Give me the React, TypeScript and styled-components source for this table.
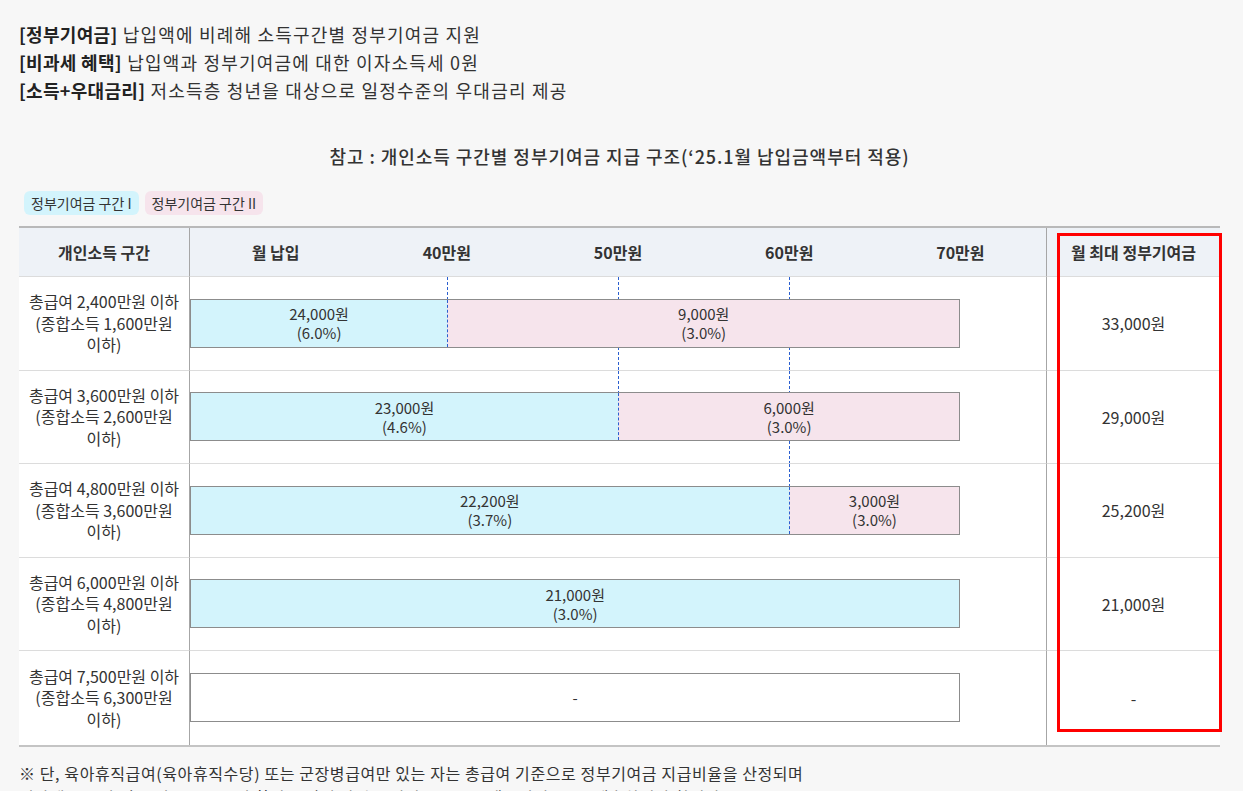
import React from "react";
import styled, { createGlobalStyle } from "styled-components";

const GlobalStyle = createGlobalStyle`
  html, body {
    margin: 0;
    overflow: hidden;
    background: #f7f7f7;
  }
  body {
    font-family: "Noto Sans CJK KR", "Noto Sans", sans-serif;
    color: #333;
  }
`;

const Page = styled.div`
  width: 1201px;
  padding: 20px 23px 0 19px;
`;

const IntroList = styled.ul`
  list-style: none;
  margin: 0;
  padding: 0;
  font-size: 18px;
  line-height: 28px;
  letter-spacing: 1.2px;
  color: #333;
`;

const Tag = styled.strong`
  font-weight: 700;
  letter-spacing: 0.3px;
  color: #222;
`;

const Title = styled.h3`
  margin: 38px 0 0;
  text-align: center;
  font-size: 18px;
  line-height: 28px;
  font-weight: 500;
  letter-spacing: 0.95px;
  color: #333;
`;

const Legend = styled.div`
  display: flex;
  gap: 6px;
  margin: 21px 0 11px 5px;
`;

const Chip = styled.span<{ $bg: string }>`
  display: inline-block;
  height: 24px;
  padding: 0 7px;
  border-radius: 6px;
  background: ${(p) => p.$bg};
  font-size: 14px;
  line-height: 24px;
  color: #333;
`;

const Table = styled.div`
  position: relative;
  display: grid;
  grid-template-columns: 171px 857px 173px;
  background: #fff;
  border-top: 2px solid #b9b9b9;
  border-bottom: 2px solid #c4c4c4;
`;

const HeadCell = styled.div<{ $divider?: boolean }>`
  box-sizing: border-box;
  height: 49px;
  display: flex;
  align-items: center;
  justify-content: center;
  background: #eef2f7;
  border-bottom: 1px solid #dcdcdc;
  border-right: ${(p) => (p.$divider ? "1px solid #a6a6a6" : "none")};
  font-size: 16px;
  font-weight: 700;
  color: #333;
`;

const AxisHead = styled(HeadCell)`
  display: grid;
  grid-template-columns: repeat(5, 1fr);
  justify-items: center;
`;

const Cell = styled.div<{ $divider?: boolean; $last?: boolean }>`
  box-sizing: border-box;
  height: 93.5px;
  display: flex;
  align-items: center;
  justify-content: center;
  border-bottom: ${(p) => (p.$last ? "none" : "1px solid #dcdcdc")};
  border-right: ${(p) => (p.$divider ? "1px solid #a6a6a6" : "none")};
  font-size: 16px;
  color: #333;
`;

const LabelCell = styled(Cell)`
  padding: 0 6px;
  text-align: center;
  line-height: 21.5px;
  word-break: keep-all;
`;

const ChartCell = styled(Cell)`
  position: relative;
  justify-content: flex-start;
`;

const Guide = styled.span<{ $at: number; $ends?: boolean }>`
  position: absolute;
  top: 0;
  bottom: ${(p) => (p.$ends ? "23px" : "0")};
  left: ${(p) => p.$at}%;
  width: 1px;
  background-image: repeating-linear-gradient(
    to bottom,
    #2b5fcf 0 3px,
    transparent 3px 5px
  );
`;

const Bar = styled.div`
  position: relative;
  z-index: 1;
  box-sizing: border-box;
  width: 90%;
  height: 49px;
  display: flex;
  border: 1px solid #8c8c8c;
  background: #fff;
`;

const Segment = styled.div<{ $share: number; $tone: "one" | "two" | "none" }>`
  box-sizing: border-box;
  width: ${(p) => p.$share * 100}%;
  display: flex;
  flex-direction: column;
  align-items: center;
  justify-content: center;
  background: ${(p) =>
    p.$tone === "one" ? "#d3f4fc" : p.$tone === "two" ? "#f6e4ec" : "#fff"};
  font-size: 15px;
  line-height: 19px;
  color: #333;
  & + & {
    border-left: 1px dashed #2b5fcf;
  }
`;

const RedBox = styled.div`
  position: absolute;
  top: 5px;
  right: -2px;
  bottom: 13px;
  width: 165px;
  box-sizing: border-box;
  border: 3px solid #ff0000;
  pointer-events: none;
  z-index: 2;
`;

const Notes = styled.div`
  margin-top: 14px;
  font-size: 16px;
  line-height: 24px;
  letter-spacing: 0.6px;
  color: #333;
`;

type Part = { share: number; tone: "one" | "two" | "none"; amount: string; rate?: string };
type Line = { at: number; ends?: boolean };

const rows: { gross: string; total: string; guides: Line[]; parts: Part[]; max: string }[] = [
  {
    gross: "2,400",
    total: "1,600",
    guides: [{ at: 30, ends: true }, { at: 50 }, { at: 70 }],
    parts: [
      { share: 3 / 9, tone: "one", amount: "24,000원", rate: "(6.0%)" },
      { share: 6 / 9, tone: "two", amount: "9,000원", rate: "(3.0%)" },
    ],
    max: "33,000원",
  },
  {
    gross: "3,600",
    total: "2,600",
    guides: [{ at: 50, ends: true }, { at: 70 }],
    parts: [
      { share: 5 / 9, tone: "one", amount: "23,000원", rate: "(4.6%)" },
      { share: 4 / 9, tone: "two", amount: "6,000원", rate: "(3.0%)" },
    ],
    max: "29,000원",
  },
  {
    gross: "4,800",
    total: "3,600",
    guides: [{ at: 70, ends: true }],
    parts: [
      { share: 7 / 9, tone: "one", amount: "22,200원", rate: "(3.7%)" },
      { share: 2 / 9, tone: "two", amount: "3,000원", rate: "(3.0%)" },
    ],
    max: "25,200원",
  },
  {
    gross: "6,000",
    total: "4,800",
    guides: [],
    parts: [{ share: 1, tone: "one", amount: "21,000원", rate: "(3.0%)" }],
    max: "21,000원",
  },
  {
    gross: "7,500",
    total: "6,300",
    guides: [],
    parts: [{ share: 1, tone: "none", amount: "-" }],
    max: "-",
  },
];

const axis = ["월 납입", "40만원", "50만원", "60만원", "70만원"];

export default function App() {
  return (
    <>
      <GlobalStyle />
      <Page>
        <IntroList>
          <li>
            <Tag>[정부기여금]</Tag> 납입액에 비례해 소득구간별 정부기여금 지원
          </li>
          <li>
            <Tag>[비과세 혜택]</Tag> 납입액과 정부기여금에 대한 이자소득세 0원
          </li>
          <li>
            <Tag>[소득+우대금리]</Tag> 저소득층 청년을 대상으로 일정수준의 우대금리 제공
          </li>
        </IntroList>

        <Title>참고 : 개인소득 구간별 정부기여금 지급 구조(‘25.1월 납입금액부터 적용)</Title>

        <Legend>
          <Chip $bg="#d3f4fc">정부기여금 구간 I</Chip>
          <Chip $bg="#f6e4ec">정부기여금 구간 II</Chip>
        </Legend>

        <Table>
          <HeadCell $divider>개인소득 구간</HeadCell>
          <AxisHead $divider>
            {axis.map((a) => (
              <span key={a}>{a}</span>
            ))}
          </AxisHead>
          <HeadCell>월 최대 정부기여금</HeadCell>

          {rows.map((r, i) => {
            const last = i === rows.length - 1;
            return (
              <React.Fragment key={r.gross}>
                <LabelCell $divider $last={last}>
                  <div>
                    총급여 {r.gross}만원 이하
                    <br />
                    (종합소득 {r.total}만원 이하)
                  </div>
                </LabelCell>
                <ChartCell $divider $last={last}>
                  {r.guides.map((g) => (
                    <Guide key={g.at} $at={g.at} $ends={g.ends} />
                  ))}
                  <Bar>
                    {r.parts.map((p) => (
                      <Segment key={p.amount} $share={p.share} $tone={p.tone}>
                        <span>{p.amount}</span>
                        {p.rate && <span>{p.rate}</span>}
                      </Segment>
                    ))}
                  </Bar>
                </ChartCell>
                <Cell $last={last}>{r.max}</Cell>
              </React.Fragment>
            );
          })}
          <RedBox />
        </Table>

        <Notes>
          <div>※ 단, 육아휴직급여(육아휴직수당) 또는 군장병급여만 있는 자는 총급여 기준으로 정부기여금 지급비율을 산정되며</div>
          <div>비과세 소득만 있는 경우 소득요건 확인을 위해 관련 증빙서류(소득금액증명원 등)를 제출하여야 합니다</div>
        </Notes>
      </Page>
    </>
  );
}
